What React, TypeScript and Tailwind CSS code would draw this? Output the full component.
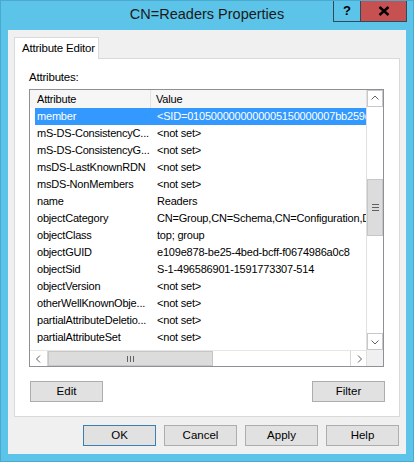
const rows: [string, string][] = [
  ['member', '<SID=0105000000000005150000007bb259d1d1'],
  ['mS-DS-ConsistencyC...', '<not set>'],
  ['mS-DS-ConsistencyG...', '<not set>'],
  ['msDS-LastKnownRDN', '<not set>'],
  ['msDS-NonMembers', '<not set>'],
  ['name', 'Readers'],
  ['objectCategory', 'CN=Group,CN=Schema,CN=Configuration,DC=corp,DC=local'],
  ['objectClass', 'top; group'],
  ['objectGUID', 'e109e878-be25-4bed-bcff-f0674986a0c8'],
  ['objectSid', 'S-1-496586901-1591773307-514'],
  ['objectVersion', '<not set>'],
  ['otherWellKnownObje...', '<not set>'],
  ['partialAttributeDeletio...', '<not set>'],
  ['partialAttributeSet', '<not set>'],
  ['proxiedObjectName', '<not set>'],
];

const Chevron = ({ dir }: { dir: 'up' | 'down' | 'left' | 'right' }) => {
  const d = {
    up: 'M1.5 5.5 L5 2 L8.5 5.5',
    down: 'M1.5 3.5 L5 7 L8.5 3.5',
    left: 'M6 1.5 L2.5 5 L6 8.5',
    right: 'M4 1.5 L7.5 5 L4 8.5',
  }[dir];
  return (
    <svg width="10" height="10" viewBox="0 0 10 10">
      <path d={d} fill="none" stroke="#606060" strokeWidth="1" />
    </svg>
  );
};

const DialogButton = ({ label, isDefault = false }: { label: string; isDefault?: boolean }) => (
  <button
    className={`w-[73px] h-[21px] bg-[#e1e1e1] border text-[11.5px] text-black leading-none ${
      isDefault ? 'border-[#3c7fb1]' : 'border-[#adadad]'
    }`}
  >
    {label}
  </button>
);

export default function App() {
  return (
    <div
      className="w-[414px] h-[462px] bg-[#5cc4e8] flex flex-col border border-[#4aa9cc] overflow-hidden"
      style={{ fontFamily: '"Liberation Sans", Arial, sans-serif' }}
    >
      {/* title bar */}
      <div className="relative h-[29px] flex items-center justify-center shrink-0">
        <span className="text-[14.5px] text-[#1a1a1a] -mt-[1px]">CN=Readers Properties</span>
        <div className="absolute top-[-1px] right-[6px] flex h-[22px] border border-[#324a58] border-t-0">
          <div className="w-[27px] flex items-center justify-center font-bold text-[13px] text-black border-r border-[#324a58]">
            ?
          </div>
          <div className="w-[45px] bg-[#c75050] flex items-center justify-center">
            <svg width="12" height="10" viewBox="0 0 12 10">
              <path d="M1.5 1 L10.5 9 M10.5 1 L1.5 9" stroke="#000" strokeWidth="2.4" />
            </svg>
          </div>
        </div>
      </div>

      {/* client area */}
      <div className="flex-1 mx-[7px] mb-[7px] bg-[#f0f0f0] px-[6px] pt-[7px] flex flex-col">
        <div className="relative z-10 -mb-px w-[85px] h-[22px] bg-white border border-b-0 border-[#d9d9d9] flex items-center pl-[7px] text-[11.5px] text-black whitespace-nowrap tracking-[-0.2px]">
          Attribute Editor
        </div>
        <div className="w-[386px] h-[359px] bg-white border border-[#d9d9d9] pl-[14px] pt-[11px] flex flex-col">
          <div className="h-[14px] leading-[14px] text-[11.5px] text-black tracking-[-0.2px]">Attributes:</div>

          {/* list view */}
          <div className="mt-[5px] w-[355px] h-[278px] border border-[#8e9096] flex text-[11px] tracking-[-0.2px] text-black">
            <div className="w-[336px] flex flex-col">
              <div className="h-[18px] bg-[#f6f6f6] flex items-center">
                <div className="w-[121px] h-full flex items-center pl-[7px] border-r border-[#e3e3e3]">Attribute</div>
                <div className="pl-[5px]">Value</div>
              </div>
              <div className="h-[242px] overflow-hidden">
                {rows.map(([attr, value], i) => (
                  <div key={attr} className="h-[17px] pl-[5px] flex">
                    <div className={`flex-1 flex items-center whitespace-nowrap overflow-hidden ${i === 0 ? 'bg-[#3399ff] text-white' : ''}`}>
                      <div className="w-[116px] shrink-0 pl-[2px]">{attr}</div>
                      <div className="pl-[6px]">{value}</div>
                    </div>
                  </div>
                ))}
              </div>
              {/* horizontal scrollbar */}
              <div className="h-[16px] flex border-t border-[#e6e6e6]">
                <div className="w-[18px] flex items-center justify-center border-r border-[#d6d6d6]">
                  <Chevron dir="left" />
                </div>
                <div className="w-[165px] bg-[#dcdcdc] border border-[#c6c6c6] flex items-center justify-center gap-[2px]">
                  <span className="w-px h-[6px] bg-[#606060]" />
                  <span className="w-px h-[6px] bg-[#606060]" />
                  <span className="w-px h-[6px] bg-[#606060]" />
                </div>
                <div className="flex-1" />
                <div className="w-[16px] flex items-center justify-center border-l border-[#d6d6d6]">
                  <Chevron dir="right" />
                </div>
              </div>
            </div>

            {/* vertical scrollbar */}
            <div className="w-[17px] flex flex-col border-l border-[#e0e0e0]">
              <div className="h-[17px] flex items-center justify-center border border-[#c8c8c8]">
                <Chevron dir="up" />
              </div>
              <div className="h-[226px] flex flex-col">
                <div className="mt-[72px] h-[57px] bg-[#dcdcdc] border border-[#c6c6c6] flex flex-col items-center justify-center gap-[2px]">
                  <span className="w-[7px] h-px bg-[#606060]" />
                  <span className="w-[7px] h-px bg-[#606060]" />
                  <span className="w-[7px] h-px bg-[#606060]" />
                </div>
              </div>
              <div className="h-[17px] flex items-center justify-center border border-[#c8c8c8]">
                <Chevron dir="down" />
              </div>
              <div className="flex-1 bg-[#f0f0f0]" />
            </div>
          </div>

          <div className="mt-[14px] w-[356px] flex justify-between pl-px">
            <DialogButton label="Edit" />
            <DialogButton label="Filter" />
          </div>
        </div>

        <div className="mt-[8px] flex justify-end gap-[8px] pr-[1px]">
          <DialogButton label="OK" isDefault />
          <DialogButton label="Cancel" />
          <DialogButton label="Apply" />
          <DialogButton label="Help" />
        </div>
      </div>
    </div>
  );
}
